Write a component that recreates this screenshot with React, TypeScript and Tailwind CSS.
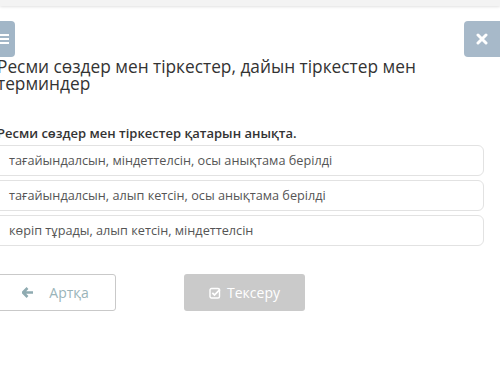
import React from 'react';

const options = [
  'тағайындалсын, міндеттелсін, осы анықтама берілді',
  'тағайындалсын, алып кетсін, осы анықтама берілді',
  'көріп тұрады, алып кетсін, міндеттелсін',
];

const App: React.FC = () => {
  return (
    <div className="w-[500px] h-[382px] overflow-hidden bg-white font-['Open_Sans',sans-serif]">
      <div className="h-[6px] bg-[#f3f3f3] shadow-[0_1px_3px_rgba(0,0,0,0.12)]"></div>

      <div className="mt-[15px] ml-[-21px] w-[525px] flex justify-between">
        <div className="w-[36px] h-[36px] rounded-[4px] bg-[#a2b6c7] flex flex-col items-end justify-center gap-[2px] pr-[6px]">
          <div className="w-[10px] h-[2px] bg-white"></div>
          <div className="w-[10px] h-[2px] bg-white"></div>
          <div className="w-[10px] h-[2px] bg-white"></div>
        </div>
        <div className="w-[40px] h-[36px] rounded-[4px] bg-[#a7b9c9] flex items-center pl-[12px]">
          <svg width="12" height="12" viewBox="0 0 12 12">
            <path d="M2 2 L10 10 M10 2 L2 10" stroke="white" strokeWidth="3" strokeLinecap="round" />
          </svg>
        </div>
      </div>

      <h1 className="mt-[1px] ml-[-3px] text-[17.3px] leading-[17px] text-[#333] font-normal">
        Ресми сөздер мен тіркестер, дайын тіркестер мен терминдер
      </h1>

      <p className="mt-[32px] ml-[-3px] text-[13px] leading-[18px] font-semibold text-[#333]">
        Ресми сөздер мен тіркестер қатарын анықта.
      </p>

      <div className="mt-[3px] ml-[-10px] w-[494px] flex flex-col gap-[4px]">
        {options.map(o => (
          <div key={o} className="h-[31px] border border-[#e2e2e2] rounded-[6px] flex items-center pl-[18px] text-[12.7px] text-[#555]">
            {o}
          </div>
        ))}
      </div>

      <div className="mt-[28px] ml-[-5px] flex gap-[68px]">
        <div className="w-[121px] h-[37px] border border-[#c9c9c9] rounded-[3px] flex items-center justify-center gap-[15px] text-[14px] text-[#9ab4b9]">
          <svg width="12" height="11" viewBox="0 0 12 11">
            <path d="M5.5 1 L1 5.5 L5.5 10 M1.5 5.5 H11" stroke="#8fabb1" strokeWidth="2.6" fill="none" strokeLinejoin="round" />
          </svg>
          <span>Артқа</span>
        </div>
        <div className="w-[121px] h-[37px] rounded-[3px] bg-[#cacaca] flex items-center justify-center gap-[6px] text-[14px] text-white">
          <svg width="12" height="12" viewBox="0 0 12 12">
            <rect x="1" y="1.5" width="9.5" height="9.5" rx="1.5" stroke="white" strokeWidth="1.4" fill="none" />
            <path d="M3.3 5.8 L5.5 8 L11 2.3" stroke="white" strokeWidth="1.8" fill="none" />
          </svg>
          <span>Тексеру</span>
        </div>
      </div>
    </div>
  );
};

export default App;
